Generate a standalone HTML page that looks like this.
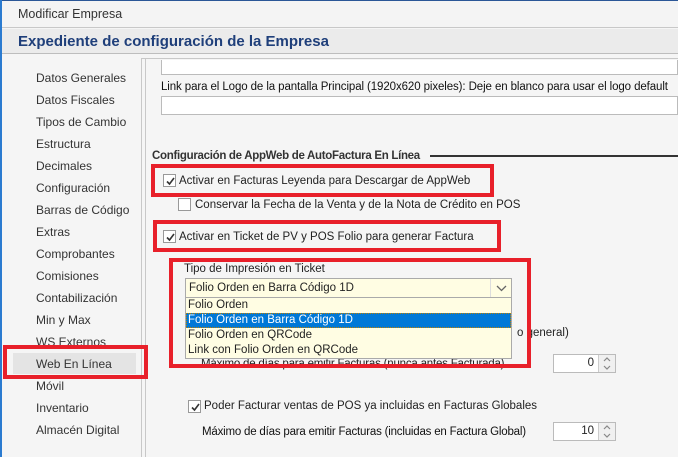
<!DOCTYPE html>
<html><head><meta charset="utf-8"><style>
*{margin:0;padding:0;box-sizing:border-box}
body{width:678px;height:457px;overflow:hidden;background:#f5f5f5;font-family:"Liberation Sans",sans-serif;font-size:11.5px;color:#222;position:relative}
.a{position:absolute;white-space:nowrap}
.t{line-height:14px}
.red{position:absolute;border:4px solid #e8202a}
.cb{position:absolute;width:13px;height:13px;border:1px solid #999;background:#fff}
.cb svg{position:absolute;left:1px;top:1px}
.spin{position:absolute;width:63px;height:19px;border:1px solid #bbb;background:#fff}
.spin .b{position:absolute;right:0;top:0;width:17px;height:17px;border-left:1px solid #ccc;background:#f0f0f0}
</style></head><body>
<div class="a" style="left:0;top:0;width:678px;height:1px;background:#2b5797"></div>
<div class="a" style="left:0;top:0;width:2px;height:457px;background:#2b7bd0"></div>
<div class="a" style="left:2px;top:1px;width:676px;height:27px;background:#f4f4f4;border-bottom:1px solid #c8c8c8"></div>
<div class="a t" style="left:18px;top:7px;font-size:12.5px;color:#333">Modificar Empresa</div>
<div class="a" style="left:2px;top:29px;width:676px;height:25px;background:#ebebeb;border-bottom:1px solid #bdbdbd"></div>
<div class="a" style="left:18px;top:33px;font-size:15px;font-weight:bold;color:#1f3f7a">Expediente de configuración de la Empresa</div>
<!-- sidebar -->
<div class="a" style="left:141px;top:58px;width:1px;height:399px;background:#c8c8c8"></div>
<div class="a" style="left:145px;top:58px;width:1px;height:399px;background:#c8c8c8"></div>
<div class="a" style="left:142px;top:58px;width:536px;height:1px;background:#c8c8c8"></div>
<div class="a" style="left:13px;top:353px;width:123px;height:21px;background:#e4e4e4"></div>
<div class="a t" style="left:36px;top:67px;line-height:22px;font-size:12px;color:#333">Datos Generales<br>Datos Fiscales<br>Tipos de Cambio<br>Estructura<br>Decimales<br>Configuración<br>Barras de Código<br>Extras<br>Comprobantes<br>Comisiones<br>Contabilización<br>Min y Max<br>WS Externos<br>Web En Línea<br>Móvil<br>Inventario<br>Almacén Digital</div>
<div class="red" style="left:3px;top:345px;width:145px;height:34px"></div>
<!-- content -->
<div class="a" style="left:161px;top:60px;width:517px;height:15px;background:#fff;border:1px solid #bbb;border-top:none"></div>
<div class="a t" style="left:161px;top:80px;color:#111;letter-spacing:-0.1px">Link para el Logo de la pantalla Principal (1920x620 pixeles): Deje en blanco para usar el logo default</div>
<div class="a" style="left:161px;top:96px;width:517px;height:19px;background:#fff;border:1px solid #bbb"></div>
<div class="a t" style="left:152px;top:149px;font-weight:bold;font-size:11.5px;letter-spacing:-0.3px;color:#333">Configuración de AppWeb de AutoFactura En Línea</div>
<div class="a" style="left:430px;top:155px;width:248px;height:2px;background:#333"></div>
<div class="red" style="left:151px;top:164px;width:343px;height:33px"></div>
<div class="cb" style="left:163px;top:174px"><svg width="11" height="11"><path d="M2 5.5 L4.5 8 L9 2" stroke="#333" stroke-width="1.6" fill="none"/></svg></div>
<div class="a t" style="left:179px;top:174px">Activar en Facturas Leyenda para Descargar de AppWeb</div>
<div class="cb" style="left:178px;top:198px"></div>
<div class="a t" style="left:195px;top:198px">Conservar la Fecha de la Venta y de la Nota de Crédito en POS</div>
<div class="red" style="left:153px;top:220px;width:348px;height:32px"></div>
<div class="cb" style="left:163px;top:230px"><svg width="11" height="11"><path d="M2 5.5 L4.5 8 L9 2" stroke="#333" stroke-width="1.6" fill="none"/></svg></div>
<div class="a t" style="left:179px;top:230px">Activar en Ticket de PV y POS Folio para generar Factura</div>
<div class="a t" style="left:517px;top:326px">o general)</div>
<div class="a t" style="left:201px;top:357px;letter-spacing:-0.2px">Máximo de días para emitir Facturas (nunca antes Facturada)</div>
<div class="red" style="left:169px;top:258px;width:362px;height:110px"></div>
<div class="a t" style="left:184px;top:262px">Tipo de Impresión en Ticket</div>
<div class="a" style="left:185px;top:278px;width:327px;height:20px;background:#fffde3;border:1px solid #aaa"></div>
<div class="a t" style="left:189px;top:281px">Folio Orden en Barra Código 1D</div>
<div class="a" style="left:490px;top:279px;width:21px;height:18px;border-left:1px solid #ddd"><svg width="21" height="18"><path d="M6 7 L10.5 11.5 L15 7" stroke="#666" stroke-width="1.3" fill="none"/></svg></div>
<div class="a" style="left:185px;top:297px;width:327px;height:62px;background:#fffde3;border:1px solid #aaa"></div>
<div class="a" style="left:186px;top:313px;width:325px;height:15px;background:#0078d7;border:1px dotted #c08000"></div>
<div class="a" style="left:188px;top:298px;line-height:15px">Folio Orden<br><span style="color:#fff">Folio Orden en Barra Código 1D</span><br>Folio Orden en QRCode<br>Link con Folio Orden en QRCode</div>
<div class="spin" style="left:553px;top:354px"><div class="a" style="right:21px;top:2px">0</div><div class="b"><svg width="16" height="17"><path d="M5 6 L8 3 L11 6 M5 11 L8 14 L11 11" stroke="#888" stroke-width="1.2" fill="none"/></svg></div></div>
<div class="cb" style="left:188px;top:400px"><svg width="11" height="11"><path d="M2 5.5 L4.5 8 L9 2" stroke="#333" stroke-width="1.6" fill="none"/></svg></div>
<div class="a t" style="left:204px;top:399px">Poder Facturar ventas de POS ya incluidas en Facturas Globales</div>
<div class="a t" style="left:202px;top:425px;color:#111;letter-spacing:-0.2px">Máximo de días para emitir Facturas (incluidas en Factura Global)</div>
<div class="spin" style="left:553px;top:422px"><div class="a" style="right:21px;top:2px">10</div><div class="b"><svg width="16" height="17"><path d="M5 6 L8 3 L11 6 M5 11 L8 14 L11 11" stroke="#888" stroke-width="1.2" fill="none"/></svg></div></div>
</body></html>
